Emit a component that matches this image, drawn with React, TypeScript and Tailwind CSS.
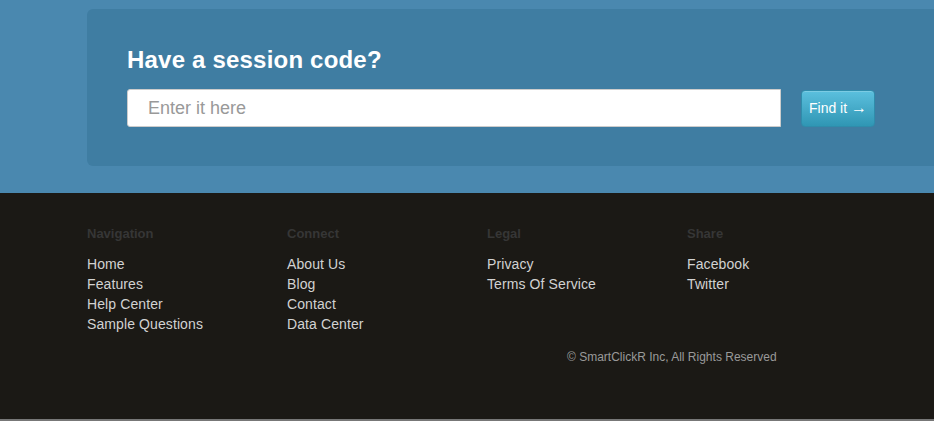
import React from 'react';

const columns = [
    { title: 'Navigation', links: ['Home', 'Features', 'Help Center', 'Sample Questions'] },
    { title: 'Connect', links: ['About Us', 'Blog', 'Contact', 'Data Center'] },
    { title: 'Legal', links: ['Privacy', 'Terms Of Service'] },
    { title: 'Share', links: ['Facebook', 'Twitter'] },
];

export default function App() {
    return (
        <div className="w-[934px] h-[421px] overflow-hidden font-['Liberation_Sans',Arial,sans-serif]">
            <section className="h-[193px] bg-[#4a88af] pt-[9px] pl-[87px]">
                <div className="h-[157px] w-[900px] rounded-l-md bg-[#3f7da2] pl-10 pt-[36px]">
                    <h2 className="text-[24px] leading-[30px] font-bold text-white tracking-[0.2px]">Have a session code?</h2>
                    <div className="mt-[14px] flex items-center">
                        <input
                            type="text"
                            placeholder="Enter it here"
                            className="h-[38px] w-[654px] rounded-l-[3px] border border-[#ccc] bg-white px-5 text-[18px] text-[#555] placeholder:text-[#999] outline-none"
                        />
                        <button className="ml-5 h-[37px] w-[74px] rounded-[4px] border border-[#2f8cab] bg-gradient-to-b from-[#5bc0de] to-[#2f96b4] text-[14px] text-white shadow-[inset_0_1px_0_rgba(255,255,255,0.2)]">
                            Find it <span className="text-[16px]">&rarr;</span>
                        </button>
                    </div>
                </div>
            </section>
            <footer className="h-[228px] bg-[#1b1915] pl-[87px] pt-[33px] border-b-2 border-[#777]">
                <div className="flex">
                    {columns.map((col) => (
                        <div key={col.title} className="w-[200px]">
                            <h4 className="text-[13px] leading-4 font-bold text-[#363636]">{col.title}</h4>
                            <ul className="mt-[12px]">
                                {col.links.map((l) => (
                                    <li key={l} className="text-[14px] leading-5 text-[#d2d2d2] tracking-[0.1px]">{l}</li>
                                ))}
                            </ul>
                        </div>
                    ))}
                </div>
                <p className="mt-[15px] pl-[480px] text-[12px] leading-4 text-[#9a9a9a]">
                    &copy; SmartClickR Inc, All Rights Reserved
                </p>
            </footer>
        </div>
    );
}
